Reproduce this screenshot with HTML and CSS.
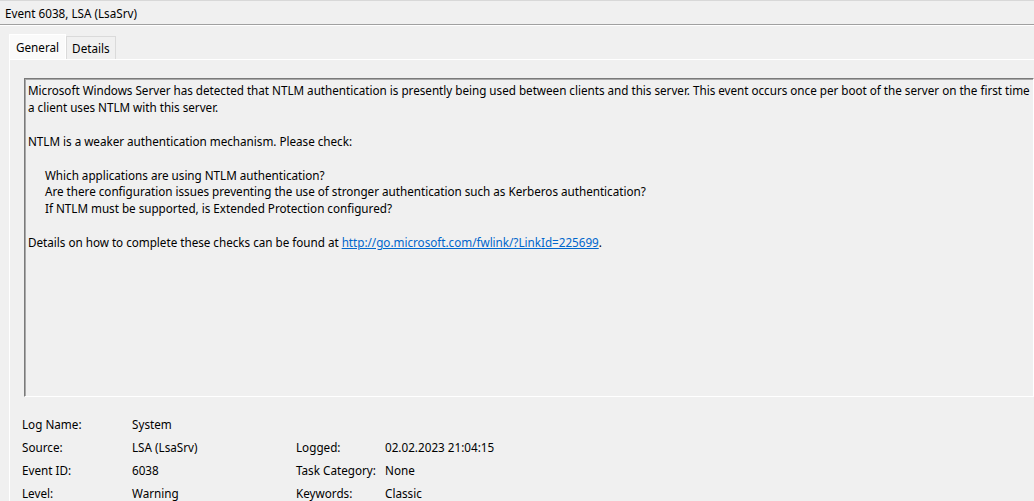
FILE: index.html
```html
<!DOCTYPE html>
<html lang="en">
<head>
    <meta charset="UTF-8">
    <title>Event 6038, LSA (LsaSrv)</title>
    <link rel="stylesheet" href="styles.css">
</head>
<body>

    <div class="titlebar">Event 6038, LSA (LsaSrv)</div>

    <div class="tabs">
        <div class="tab active">General</div>
        <div class="tab">Details</div>
    </div>

    <div class="panel">
        <div class="message">
            <p>Microsoft Windows Server has detected that NTLM authentication is presently being used between clients and this server. This event occurs once per boot of the server on the first time a client uses NTLM with this server.</p>
            <p>NTLM is a weaker authentication mechanism. Please check:</p>
            <ul class="checks">
                <li>Which applications are using NTLM authentication?</li>
                <li>Are there configuration issues preventing the use of stronger authentication such as Kerberos authentication?</li>
                <li>If NTLM must be supported, is Extended Protection configured?</li>
            </ul>
            <p>Details on how to complete these checks can be found at <a href="#">http://go.microsoft.com/fwlink/?LinkId=225699</a>.</p>
        </div>

        <div class="props">
            <span>Log Name:</span><span>System</span><span></span><span></span>
            <span>Source:</span><span>LSA (LsaSrv)</span><span>Logged:</span><span>02.02.2023 21:04:15</span>
            <span>Event ID:</span><span>6038</span><span>Task Category:</span><span>None</span>
            <span>Level:</span><span>Warning</span><span>Keywords:</span><span>Classic</span>
        </div>
    </div>

</body>
</html>
```

FILE: styles.css
```css
* {
    margin: 0;
    padding: 0;
    box-sizing: border-box;
}

body {
    background-color: #f0f0f0;
    color: #000;
    font-family: "Noto Sans", "Open Sans", sans-serif;
    font-size: 11.7px;
    overflow: hidden;
}

.titlebar {
    height: 25px;
    line-height: 24px;
    padding-left: 5px;
    border-top: 1px solid #d8d8d8;
    border-bottom: 1px solid #a0a0a0;
    box-shadow: 0 1px 0 #fff;
}

.tabs {
    display: flex;
    align-items: flex-end;
    margin: 9px 0 0 9px;
    height: 25px;
}

.tab {
    height: 23px;
    line-height: 23px;
    padding: 0 5px;
    border: 1px solid #dadada;
    border-bottom: none;
}

.tab.active {
    height: 25px;
    line-height: 24px;
    padding: 0 6px;
    background-color: #fafafa;
    border-color: #fff;
}

.panel {
    margin-left: 9px;
    border-top: 1px solid #fff;
    border-left: 1px solid #fff;
    padding: 18px 0 0 12px;
}

.message {
    margin-left: 2px;
    height: 319px;
    padding: 3px 0 3px 3px;
    border: 1px solid;
    border-color: #7a7a7a #fff #fff #7a7a7a;
    box-shadow: inset 1px 1px 0 #a8a8a8;
    line-height: 16.9px;
    letter-spacing: -0.02px;
}

.message p,
.checks {
    margin-bottom: 16.9px;
}

.checks {
    list-style: none;
    padding-left: 17px;
}

.message a {
    color: #0066cc;
}

.props {
    display: grid;
    grid-template-columns: 110px 164px 89px auto;
    grid-auto-rows: 23px;
    align-items: center;
    margin-top: 15px;
}
```
